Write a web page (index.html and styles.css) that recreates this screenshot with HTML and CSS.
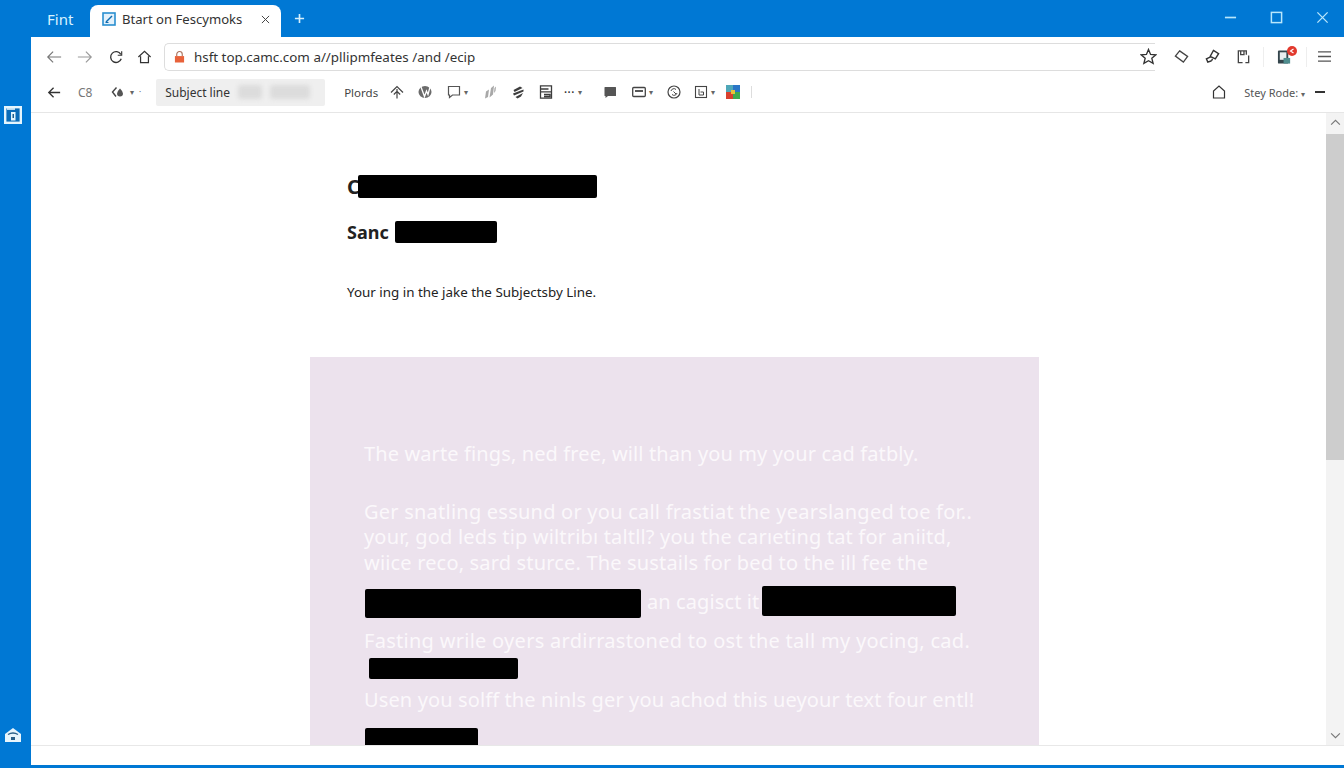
FILE: index.html
```html
<!DOCTYPE html>
<html lang="en">
<head>
<meta charset="utf-8">
<title>Btart on Fescymoks</title>
<link rel="stylesheet" href="styles.css">
</head>
<body>
<div class="app">
  <header class="titlebar">
    <span class="first-tab">Fint</span>
    <div class="tab">
      <svg class="tab-icon" viewBox="0 0 14 14"><rect x="1" y="1" width="12" height="12" fill="#e3f1fb" stroke="#2a8fd0" stroke-width="1.6"/><path d="M4 10 L10 4" stroke="#0f6cb0" stroke-width="1.4" fill="none"/><path d="M3.5 10.5h3" stroke="#0f6cb0"/></svg>
      <span class="tab-title">Btart on Fescymoks</span>
      <svg class="tab-close" viewBox="0 0 10 10"><path d="M1 1 9 9M9 1 1 9" stroke="#444" stroke-width="1.1" fill="none"/></svg>
    </div>
    <svg class="new-tab" viewBox="0 0 12 12"><path d="M6 1v10M1 6h10" stroke="#d5effc" stroke-width="1.8"/></svg>
    <div class="win-controls">
      <svg viewBox="0 0 14 14"><path d="M1 7h12" stroke="#b8e6fb" stroke-width="1.8"/></svg>
      <svg viewBox="0 0 14 14"><rect x="1.5" y="1.5" width="11" height="11" fill="none" stroke="#b8e6fb" stroke-width="1.6"/></svg>
      <svg viewBox="0 0 14 14"><path d="M1.5 1.5 12.5 12.5M12.5 1.5 1.5 12.5" stroke="#b8e6fb" stroke-width="1.4"/></svg>
    </div>
  </header>
  <div class="body-row">
    <aside class="rail">
      <svg class="rail-top" viewBox="0 0 18 18"><rect x="1.200" y="1.200" width="15.600" height="15.600" fill="#0a6cb8" stroke="#e4f5fd" stroke-width="2.400"/><path d="M3 3h8" stroke="#e4f5fd" stroke-width="1.600"/><rect x="7" y="6" width="4.500" height="8.500" fill="#e4f5fd"/><rect x="8.500" y="8" width="1.500" height="4" fill="#1d5e8c"/></svg>
      <svg class="rail-bottom" viewBox="0 0 18 16"><path d="M9 1 17 7v8H1V7Z" fill="#e8f5fc"/><path d="M4 7.5q5-3 10 0" stroke="#2a5f88" stroke-width="1.4" fill="none"/><rect x="7" y="10" width="4" height="3" fill="#2a5f88"/></svg>
    </aside>
    <main class="browser">
      <div class="addressbar">
        <svg class="nav nav-back" viewBox="0 0 18 14"><path d="M17 7H2M8 1 2 7l6 6" stroke="#777" stroke-width="1.3" fill="none"/></svg>
        <svg class="nav nav-fwd" viewBox="0 0 18 14"><path d="M1 7h15M10 1l6 6-6 6" stroke="#999" stroke-width="1.3" fill="none"/></svg>
        <svg class="nav nav-reload" viewBox="0 0 16 16"><path d="M13.5 5A6.2 6.2 0 1 0 14 10" stroke="#333" stroke-width="1.5" fill="none"/><path d="M14.5 1.5v4.5h-4.5" stroke="#333" stroke-width="1.3" fill="none"/></svg>
        <svg class="nav nav-home" viewBox="0 0 16 16"><path d="M1 8 8 1.5 15 8M3.500 7v7.500h9V7" stroke="#333" stroke-width="1.4" fill="none"/></svg>
        <div class="urlfield">
          <svg class="lock" viewBox="0 0 12 14"><path d="M3 6V4a3 3 0 0 1 6 0v2" stroke="#a9705a" stroke-width="1.2" fill="none"/><rect x="1" y="6" width="10" height="7" fill="#e8623a"/></svg>
          <span class="url">hsft top.camc.com a//pllipmfeates /and /ecip</span>
        </div>
        <svg class="star" viewBox="0 0 18 18"><path d="M9 1.500 11.200 6.800 16.800 7.200 12.500 10.800 13.900 16.300 9 13.400 4.100 16.300 5.500 10.800 1.200 7.200 6.800 6.800Z" fill="none" stroke="#333" stroke-width="1.4"/></svg>
        <div class="ext-icons">
          <svg viewBox="0 0 16 16"><path d="M6 2 14.500 8 10 14 1.500 7.500Z" fill="none" stroke="#444" stroke-width="1.400"/></svg>
          <svg viewBox="0 0 16 16"><path d="M9 1.500 14.500 5 11 10.500 5.500 8ZM6 8.500 1.500 10.500l1.500 3.500 4-1.500M7 12.500l1-2" fill="none" stroke="#333" stroke-width="1.500"/></svg>
          <svg viewBox="0 0 16 16"><path d="M7 14.500H2.500V2H11v4M5 2v4h3.500V2M13.500 7v7.500h-3.500" fill="none" stroke="#444" stroke-width="1.400"/></svg>
        </div>
        <span class="divider"></span>
        <div class="badge-icon">
          <svg viewBox="0 0 16 16"><rect x="1" y="1" width="11" height="14" rx="1" fill="#34454c"/><rect x="3" y="3" width="7" height="8" fill="#e9eef0"/><rect x="7" y="9" width="7" height="6" fill="#4f8d8e"/></svg>
          <span class="badge"><svg class="badge-mark" viewBox="0 0 6 6"><path d="M4.500 1 1.500 3 4.500 5" fill="none" stroke="#fff" stroke-width="1.100"/></svg></span>
        </div>
        <span class="divider divider-b"></span>
        <svg class="menu" viewBox="0 0 16 14"><path d="M1 2h14M1 7h14M1 12h14" stroke="#555" stroke-width="1.500"/></svg>
      </div>
      <div class="toolbar">
        <svg class="tb-back" viewBox="0 0 16 14"><path d="M15 7H2M7.500 1.500 2 7l5.500 5.500" stroke="#333" stroke-width="1.5" fill="none"/></svg>
        <span class="tb-cs">C8</span>
        <span class="tb-drop tb-drop-wide">
          <svg class="i14" viewBox="0 0 14 14"><path d="M5.500 2.500 1.500 7l3.500 4.500" fill="none" stroke="#444" stroke-width="1.400"/><path d="M9 3.500q3 3 3 5a3 3 0 0 1-6 0q0-2 3-5Z" fill="#555"/></svg>
          <span class="caret">▾</span><span class="dot">·</span>
        </span>
        <div class="subject-chip">
          <span class="subject-label">Subject line</span>
          <span class="blur blur-a"></span>
          <span class="blur blur-b"></span>
        </div>
        <span class="tb-text">Plords</span>
        <div class="tb-icons">
          <svg class="i14 g-a" viewBox="0 0 14 14"><path d="M7 13.500V4M1 7.500 7 1.500l6 6M3.800 9.500 7 6.300l3.200 3.200" fill="none" stroke="#444" stroke-width="1.200"/></svg>
          <svg class="i14 g-b" viewBox="0 0 14 14"><ellipse cx="7" cy="7" rx="6.500" ry="6" fill="#6b6b6b"/><path d="M3 2 6.500 11.500 8.500 6 10 9.500 12 2" fill="none" stroke="#fff" stroke-width="1.300"/></svg>
          <span class="tb-drop g-c"><svg class="i14" viewBox="0 0 14 14"><path d="M1.500 1.500h11v8.500H5.500L2.500 12.500V10h-1Z" fill="none" stroke="#555" stroke-width="1.200"/></svg><span class="caret">▾</span></span>
          <svg class="i14 g-d" viewBox="0 0 14 14"><path d="M2 13.500 3 6.500 6 4.500 5 12ZM6.500 12.500 8 3 11 .5 10 9.500ZM11 8 11.500 3 13 1.500 12.500 6Z" fill="#a8a8a8"/></svg>
          <svg class="i14 g-e" viewBox="0 0 14 14"><path d="M2.500 5 9 1.500 11.500 3 3.500 7ZM2 8.500 12.500 4.500 12.500 6.500 3 10.500ZM4.500 12 12 8 10 11.500 6.500 13.500Z" fill="#3d3d3d"/></svg>
          <svg class="i14 g-f" viewBox="0 0 14 14"><path d="M1.500.800h11v12.400h-11ZM1.500 4h8M1.500 6.800h11M5 9.500h6v2H5" fill="none" stroke="#3d3d3d" stroke-width="1.300"/></svg>
          <span class="tb-drop g-g"><span class="dots">•••</span><span class="caret">▾</span></span>
          <svg class="i14 g-h" viewBox="0 0 14 14"><path d="M2 2h10.500q.5 0 .5.5v8q0 .5-.5.5H5L2.500 13v-2H2q-.5 0-.5-.5v-8Q1.500 2 2 2Z" fill="#555"/></svg>
          <span class="tb-drop g-i"><svg class="i14" viewBox="0 0 14 14"><rect x=".7" y="2.500" width="12.600" height="9" rx="1" fill="none" stroke="#444" stroke-width="1.300"/><path d="M3 6h8" stroke="#444" stroke-width="1.800"/></svg><span class="dot">▾</span></span>
          <svg class="i14 g-j" viewBox="0 0 14 14"><circle cx="7" cy="7" r="6" fill="none" stroke="#444" stroke-width="1.200"/><path d="M4 6a3 3 0 0 1 5-1.500M10 8a3 3 0 0 1-5 1.500M6.500 6.500 9 9" fill="none" stroke="#444"/></svg>
          <span class="tb-drop g-k"><svg class="i14" viewBox="0 0 14 14"><rect x="1.500" y="1.500" width="11" height="11" fill="none" stroke="#444" stroke-width="1.100"/><path d="M5 4v6h4.500V7H6.500" fill="none" stroke="#444"/></svg><span class="dot">▾</span></span>
          <svg class="i14 g-l" viewBox="0 0 14 14"><rect width="7" height="7" x="7" fill="#2a76c6"/><rect width="7" height="7" fill="#4fa7b8"/><rect width="7" height="7" y="7" fill="#d8402e"/><rect width="7" height="7" x="7" y="7" fill="#3eaa4f"/><rect x="5" y="5" width="4" height="4" fill="#e8c23a"/></svg>
          <span class="tb-sep"></span>
        </div>
        <div class="tb-right">
          <svg class="i14 tb-house" viewBox="0 0 14 14"><path d="M1.500 13V6L7 1l5.500 5v7Z" fill="none" stroke="#333" stroke-width="1.200"/></svg>
          <span class="tb-view">Stey Rode: <span class="caret">▾</span></span>
          <span class="tb-min"></span>
        </div>
      </div>
      <div class="viewport">
        <div class="page">
          <div class="email-head">
            <h1 class="from"><span class="from-c">C</span><span class="redact r-title"></span></h1>
            <h2 class="sender"><span>Sanc</span><span class="redact r-sender"></span></h2>
            <p class="lede">Your ing in the jake the Subjectsby Line.</p>
          </div>
          <section class="panel">
            <p class="p-line l1">The warte fings, ned free, will than you my your cad fatbly.</p>
            <p class="p-line l2">Ger snatling essund or you call frastiat the yearslanged toe for..</p>
            <p class="p-line l3">your, god leds tip wiltribı taltll? you the carıeting tat for aniitd,</p>
            <p class="p-line l4">wiice reco, sard sturce. The sustails for bed to the ill fee the</p>
            <p class="p-line redline"><span class="redact r-a"></span><span class="mid">an cagisct it</span><span class="redact r-b"></span></p>
            <p class="p-line l6">Fasting wrile oyers ardirrastoned to ost the tall my yocing, cad.</p>
            <span class="redact r-c"></span>
            <p class="p-line l8">Usen you solff the ninls ger you achod this ueyour text four entl!</p>
            <span class="redact r-d"></span>
          </section>
        </div>
        <div class="scrollbar">
          <svg class="sb-arrow" viewBox="0 0 12 8"><path d="M1 6.500 6 1.500l5 5" fill="none" stroke="#777" stroke-width="1.300"/></svg>
          <div class="sb-track"><div class="sb-thumb"></div></div>
          <svg class="sb-arrow" viewBox="0 0 12 8"><path d="M1 1.500 6 6.500l5-5" fill="none" stroke="#777" stroke-width="1.300"/></svg>
        </div>
      </div>
      <div class="footer"></div>
    </main>
  </div>
  <div class="bottom-line"></div>
</div>
</body>
</html>
```

FILE: styles.css
```css
* { box-sizing: border-box; }
html, body { margin: 0; padding: 0; height: 100%; overflow: hidden; }
body { font-family: "Noto Sans", "Open Sans", sans-serif; color: #222; background: #fff; }
svg { display: block; flex: none; }
p, h1, h2 { margin: 0; }

.app { width: 1344px; height: 768px; display: flex; flex-direction: column; background: #0078d4; }

.titlebar { height: 37px; flex: none; display: flex; align-items: flex-end; background: #0078d4; }
.first-tab { width: 90px; padding-left: 47px; height: 37px; line-height: 39px; font-size: 15px; color: #d8f3ff; }
.tab { width: 191px; height: 32px; background: #fff; border-radius: 8px 8px 0 0; display: flex; align-items: center; padding: 0 11px 4px 12px; }
.tab-icon { width: 14px; height: 14px; }
.tab-title { margin-left: 6px; font-size: 13.1px; color: #333; white-space: nowrap; flex: 1; }
.tab-close { width: 9px; height: 9px; }
.new-tab { width: 11px; height: 11px; margin: 0 0 13px 13px; }
.win-controls { margin-left: auto; display: flex; gap: 33px; padding: 0 15px 13px 0; align-items: center; }
.win-controls svg { width: 13px; height: 13px; }

.body-row { flex: 1; display: flex; min-height: 0; }
.rail { width: 31px; flex: none; display: flex; flex-direction: column; justify-content: space-between; align-items: center; padding: 69px 0 22px; }
.rail-top { width: 18px; height: 18px; margin-left: -6px; }
.rail-bottom { width: 18px; height: 16px; margin-left: -6px; }

.browser { flex: 1; min-width: 0; background: #fff; display: flex; flex-direction: column; }

.addressbar { height: 35px; flex: none; display: flex; align-items: center; padding-top: 4px; }
.nav { height: 14px; }
.nav-back { width: 16px; margin-left: 15px; }
.nav-fwd { width: 16px; margin-left: 15px; }
.nav-reload { width: 14px; margin-left: 16px; }
.nav-home { width: 15px; margin-left: 14px; }
.urlfield { width: 991px; height: 28px; margin-left: 12px; border: 1px solid #ddd; border-right: 0; border-radius: 5px 0 0 5px; display: flex; align-items: center; padding-left: 9px; }
.lock { width: 11px; height: 14px; }
.url { margin-left: 9px; font-size: 13.4px; color: #333; white-space: nowrap; }
.star { width: 17px; height: 17px; margin-left: -15px; }
.ext-icons { display: flex; gap: 16px; margin-left: 17px; }
.ext-icons svg { width: 15px; height: 15px; }
.divider { width: 1px; height: 20px; background: #eee; margin-left: 12px; }
.divider-b { margin-left: 14px; }
.badge-icon { position: relative; margin-left: 13px; width: 15px; height: 16px; }
.badge-icon > svg { width: 15px; height: 16px; }
.badge { position: absolute; top: -3px; right: -5px; width: 10px; height: 10px; border-radius: 50%; background: #e2392d; display: flex; align-items: center; justify-content: center; }
.badge-mark { width: 6px; height: 6px; }
.menu { width: 15px; height: 13px; margin-left: 10px; }

.toolbar { height: 41px; flex: none; display: flex; align-items: center; border-bottom: 1px solid #e6e6e6; font-size: 12px; color: #555; }
.i14 { width: 14px; height: 14px; }
.tb-back { width: 14px; height: 13px; margin-left: 16px; }
.tb-cs { margin-left: 17px; width: 16px; font-size: 12px; color: #777; }
.tb-drop { display: inline-flex; align-items: center; gap: 3px; }
.toolbar > .tb-drop-wide { margin-left: 17px; gap: 5px; }
.caret, .dot { font-size: 8px; color: #666; line-height: 1; }
.dots { font-size: 7px; letter-spacing: 1px; color: #333; }
.subject-chip { margin-left: 15px; width: 169px; height: 27px; background: #efefef; border-radius: 2px; display: flex; align-items: center; padding-left: 9px; }
.subject-label { font-size: 12px; color: #333; white-space: nowrap; width: 73px; }
.blur { height: 14px; background: #dcdcdc; border-radius: 3px; filter: blur(2px); }
.blur-a { width: 24px; }
.blur-b { width: 40px; margin-left: 8px; }
.tb-text { margin-left: 19px; font-size: 11.5px; color: #444; }
.tb-icons { display: flex; align-items: center; margin-left: 12px; }
.g-b { margin-left: 14px; }
.g-c { margin-left: 15px; }
.g-d { margin-left: 15px; }
.g-e { margin-left: 14px; }
.g-f { margin-left: 14px; }
.g-g { margin-left: 11px; }
.g-h { margin-left: 21px; }
.g-i { margin-left: 15px; }
.g-j { margin-left: 14px; }
.g-k { margin-left: 13px; }
.g-l { margin-left: 11px; }
.tb-sep { width: 1px; height: 12px; background: #ddd; margin-left: 11px; }
.tb-right { margin-left: auto; display: flex; align-items: center; }
.tb-view { margin-left: 18px; font-size: 11px; color: #555; white-space: nowrap; }
.tb-min { width: 10px; height: 2px; background: #333; margin: 0 19px 0 10px; }

.viewport { flex: 1; min-height: 0; display: flex; }
.page { flex: 1; min-width: 0; overflow: hidden; padding-left: 279px; }
.email-head { padding: 62px 0 0 37px; height: 244px; }
.from { display: flex; align-items: center; height: 23px; font-size: 20px; font-weight: 700; line-height: 23px; color: #222; }
.from-c { flex: none; }
.redact { display: block; background: #000; border-radius: 2px; flex: none; }
.r-title { width: 239px; height: 23px; margin-left: -2px; }
.sender { display: flex; align-items: center; margin-top: 23px; height: 22px; font-size: 18px; font-weight: 700; color: #222; }
.sender span:first-child { width: 48px; white-space: nowrap; }
.r-sender { width: 102px; height: 22px; }
.lede { margin-top: 40px; font-size: 13.4px; line-height: 18px; color: #222; white-space: nowrap; }

.panel { width: 729px; height: 388px; background: #ece2ed; overflow: hidden; padding: 84px 0 0 54px; font-size: 20px; color: #fbf8fb; }
.p-line { height: 26px; line-height: 26px; white-space: nowrap; }
.l1 { letter-spacing: .12px; }
.l2 { margin-top: 32px; letter-spacing: .23px; }
.l3 { letter-spacing: .17px; margin-top: -1px; }
.l4 { letter-spacing: .17px; }
.redline { display: flex; align-items: center; height: 32px; margin-top: 10px; }
.r-a { width: 276px; height: 29px; margin-top: 3px; margin-left: 1px; }
.mid { margin-left: 6px; width: 115px; overflow: hidden; letter-spacing: .1px; }
.r-b { width: 194px; height: 30px; margin-top: -3px; }
.l6 { margin-top: 10px; letter-spacing: .28px; }
.r-c { width: 149px; height: 21px; margin: 4px 0 0 5px; }
.l8 { margin-top: 8px; letter-spacing: .12px; }
.r-d { width: 113px; height: 30px; margin: 15px 0 0 1px; }

.scrollbar { width: 18px; flex: none; background: #f3f3f3; display: flex; flex-direction: column; align-items: center; padding: 6px 0; }
.sb-arrow { width: 11px; height: 7px; }
.sb-track { flex: 1; width: 100%; padding-top: 8px; }
.sb-thumb { height: 326px; background: #cdcdcd; }

.footer { height: 20px; flex: none; border-top: 1px solid #e8e8e8; background: #fff; }
.bottom-line { height: 3px; flex: none; background: #0078d4; }
```
